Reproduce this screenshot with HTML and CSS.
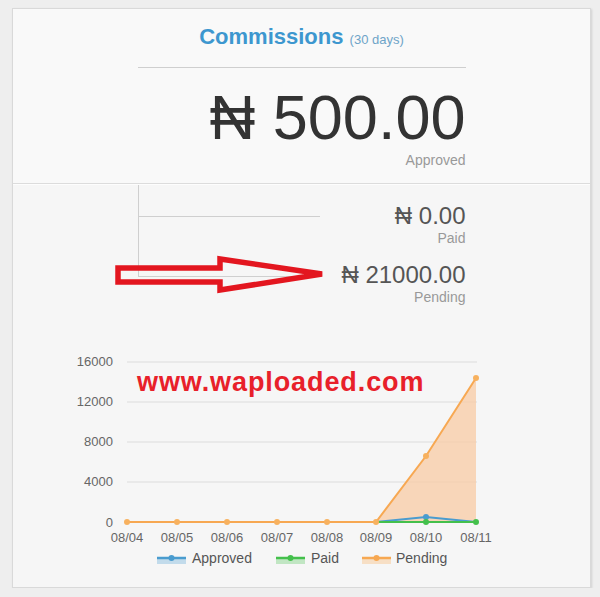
FILE: index.html
```html
<!DOCTYPE html>
<html lang="en">
<head>
    <meta charset="UTF-8">
    <meta name="viewport" content="width=device-width, initial-scale=1.0">
    <title>Commissions</title>
    <link rel="stylesheet" href="styles.css">
</head>
<body>
    <div class="card">
        <!-- Approved total -->
        <div class="card-top">
            <div class="column">
                <h2 class="title">Commissions <small>(30 days)</small></h2>
                <div class="big-value">&#8358; 500.00</div>
                <div class="label">Approved</div>
            </div>
        </div>

        <!-- Paid / Pending + chart -->
        <div class="card-bottom">
            <div class="column stats-row">
                <div class="blank-box">
                    <div class="blank-row"></div>
                </div>
                <div class="stats">
                    <div class="value">&#8358; 0.00</div>
                    <div class="label">Paid</div>
                    <div class="value gap">&#8358; 21000.00</div>
                    <div class="label">Pending</div>
                </div>
            </div>

            <svg class="arrow" width="577" height="130" viewBox="13 184 577 130">
                <path d="M118 267 L220 267 L220 258 L322 273 L220 289 L220 281 L118 281 Z" fill="none" stroke="#e3161f" stroke-width="5.5" stroke-linejoin="miter"/>
            </svg>

            <svg class="chart" width="577" height="240" viewBox="13 340 577 240">
                <g stroke="#dcdcdc" stroke-width="1">
                    <line x1="127" y1="361" x2="477" y2="361"/>
                    <line x1="127" y1="401" x2="477" y2="401"/>
                    <line x1="127" y1="441" x2="477" y2="441"/>
                    <line x1="127" y1="481" x2="477" y2="481"/>
                    <line x1="127" y1="521" x2="477" y2="521"/>
                </g>
                <g class="axis" text-anchor="end">
                    <text x="113" y="365">16000</text>
                    <text x="113" y="405">12000</text>
                    <text x="113" y="445">8000</text>
                    <text x="113" y="485">4000</text>
                    <text x="113" y="526">0</text>
                </g>
                <g class="axis" text-anchor="middle">
                    <text x="127" y="541">08/04</text>
                    <text x="177" y="541">08/05</text>
                    <text x="227" y="541">08/06</text>
                    <text x="277" y="541">08/07</text>
                    <text x="327" y="541">08/08</text>
                    <text x="376" y="541">08/09</text>
                    <text x="426" y="541">08/10</text>
                    <text x="476" y="541">08/11</text>
                </g>

                <text class="watermark" x="137" y="390">www.waploaded.com</text>

                <!-- pending -->
                <path d="M127 521 L376 521 L426 455 L476 377 L476 521 Z" fill="#f9c9a0" fill-opacity="0.7"/>
                <polyline points="127,521 177,521 227,521 277,521 327,521 376,521 426,455 476,377" fill="none" stroke="#f7a852" stroke-width="2"/>
                <!-- approved -->
                <polyline points="376,521 426,516 476,521" fill="none" stroke="#4a9ccf" stroke-width="2"/>
                <circle cx="426" cy="516" r="3" fill="#4a9ccf"/>
                <!-- paid -->
                <polyline points="376,521 426,521 476,521" fill="none" stroke="#44c04c" stroke-width="2"/>
                <circle cx="426" cy="521" r="3" fill="#44c04c"/>
                <circle cx="476" cy="521" r="3" fill="#44c04c"/>
                <g fill="#f7b15f">
                    <circle cx="127" cy="521" r="3"/>
                    <circle cx="177" cy="521" r="3"/>
                    <circle cx="227" cy="521" r="3"/>
                    <circle cx="277" cy="521" r="3"/>
                    <circle cx="327" cy="521" r="3"/>
                    <circle cx="376" cy="521" r="3"/>
                    <circle cx="426" cy="455" r="3"/>
                    <circle cx="476" cy="377" r="3"/>
                </g>

                <!-- legend -->
                <rect x="157" y="557" width="29" height="6" fill="#4a9ccf" fill-opacity="0.3"/>
                <line x1="157" y1="557" x2="186" y2="557" stroke="#4a9ccf" stroke-width="2.5"/>
                <circle cx="171.5" cy="557" r="3" fill="#4a9ccf"/>
                <text class="legend" x="192" y="562">Approved</text>

                <rect x="276" y="557" width="29" height="6" fill="#44c04c" fill-opacity="0.3"/>
                <line x1="276" y1="557" x2="305" y2="557" stroke="#44c04c" stroke-width="2.5"/>
                <circle cx="290.5" cy="557" r="3" fill="#44c04c"/>
                <text class="legend" x="311" y="562">Paid</text>

                <rect x="362" y="557" width="29" height="6" fill="#f7a852" fill-opacity="0.3"/>
                <line x1="362" y1="557" x2="391" y2="557" stroke="#f7a852" stroke-width="2.5"/>
                <circle cx="376.5" cy="557" r="3" fill="#f7a852"/>
                <text class="legend" x="396" y="562">Pending</text>
            </svg>
        </div>
    </div>
</body>
</html>
```

FILE: styles.css
```css
/* General styling */
body {
    margin: 0;
    padding: 8px 0 0 12px;
    background: #eeeeee;
    font-family: 'Liberation Sans', Arial, sans-serif;
}
.card {
    width: 577px;
    border: 1px solid #d9d9d9;
    background: #f9f9f9;
    box-shadow: 1px 1px 2px rgba(0, 0, 0, 0.12);
}
.column {
    width: 328px;
    margin: 0 auto;
}
/* Top section */
.card-top {
    padding: 15px 0 15px;
    border-bottom: 1px solid #dcdcdc;
}
.title {
    margin: 0;
    padding-bottom: 14px;
    border-bottom: 1px solid #cfcfcf;
    text-align: center;
    font-size: 22px;
    line-height: 26px;
    font-weight: bold;
    color: #3d97cf;
}
.title small {
    font-size: 13px;
    font-weight: normal;
    color: #6ea4c8;
}
.big-value {
    margin-top: 17px;
    text-align: right;
    font-size: 63px;
    line-height: 64px;
    color: #333;
}
.label {
    text-align: right;
    font-size: 14px;
    line-height: 16px;
    color: #999;
}
.card-top .label {
    margin-top: 3px;
}
/* Bottom section */
.card-bottom {
    position: relative;
    padding: 0 0 6px;
    background: #f6f6f6;
    border-top: 1px solid #fdfdfd;
}
.stats-row {
    display: flex;
    justify-content: space-between;
    align-items: flex-start;
}
.blank-box {
    width: 181px;
    height: 91px;
    border-left: 1px solid #cfcfcf;
    border-bottom: 1px solid #cfcfcf;
}
.blank-row {
    height: 31px;
    border-bottom: 1px solid #cfcfcf;
}
.stats {
    padding-top: 17px;
}
.value {
    text-align: right;
    font-size: 24px;
    line-height: 28px;
    color: #555;
}
.value.gap {
    margin-top: 15px;
}
.arrow {
    position: absolute;
    top: 0;
    left: 0;
}
.chart {
    display: block;
    margin-top: 36px;
}
.axis {
    font-family: 'Liberation Sans', Arial, sans-serif;
    font-size: 13px;
    fill: #666;
}
.legend {
    font-family: 'Liberation Sans', Arial, sans-serif;
    font-size: 14px;
    fill: #555;
}
.watermark {
    font-family: 'Liberation Sans', Arial, sans-serif;
    font-size: 27px;
    font-weight: bold;
    letter-spacing: 0.9px;
    fill: #e8202a;
}
```
